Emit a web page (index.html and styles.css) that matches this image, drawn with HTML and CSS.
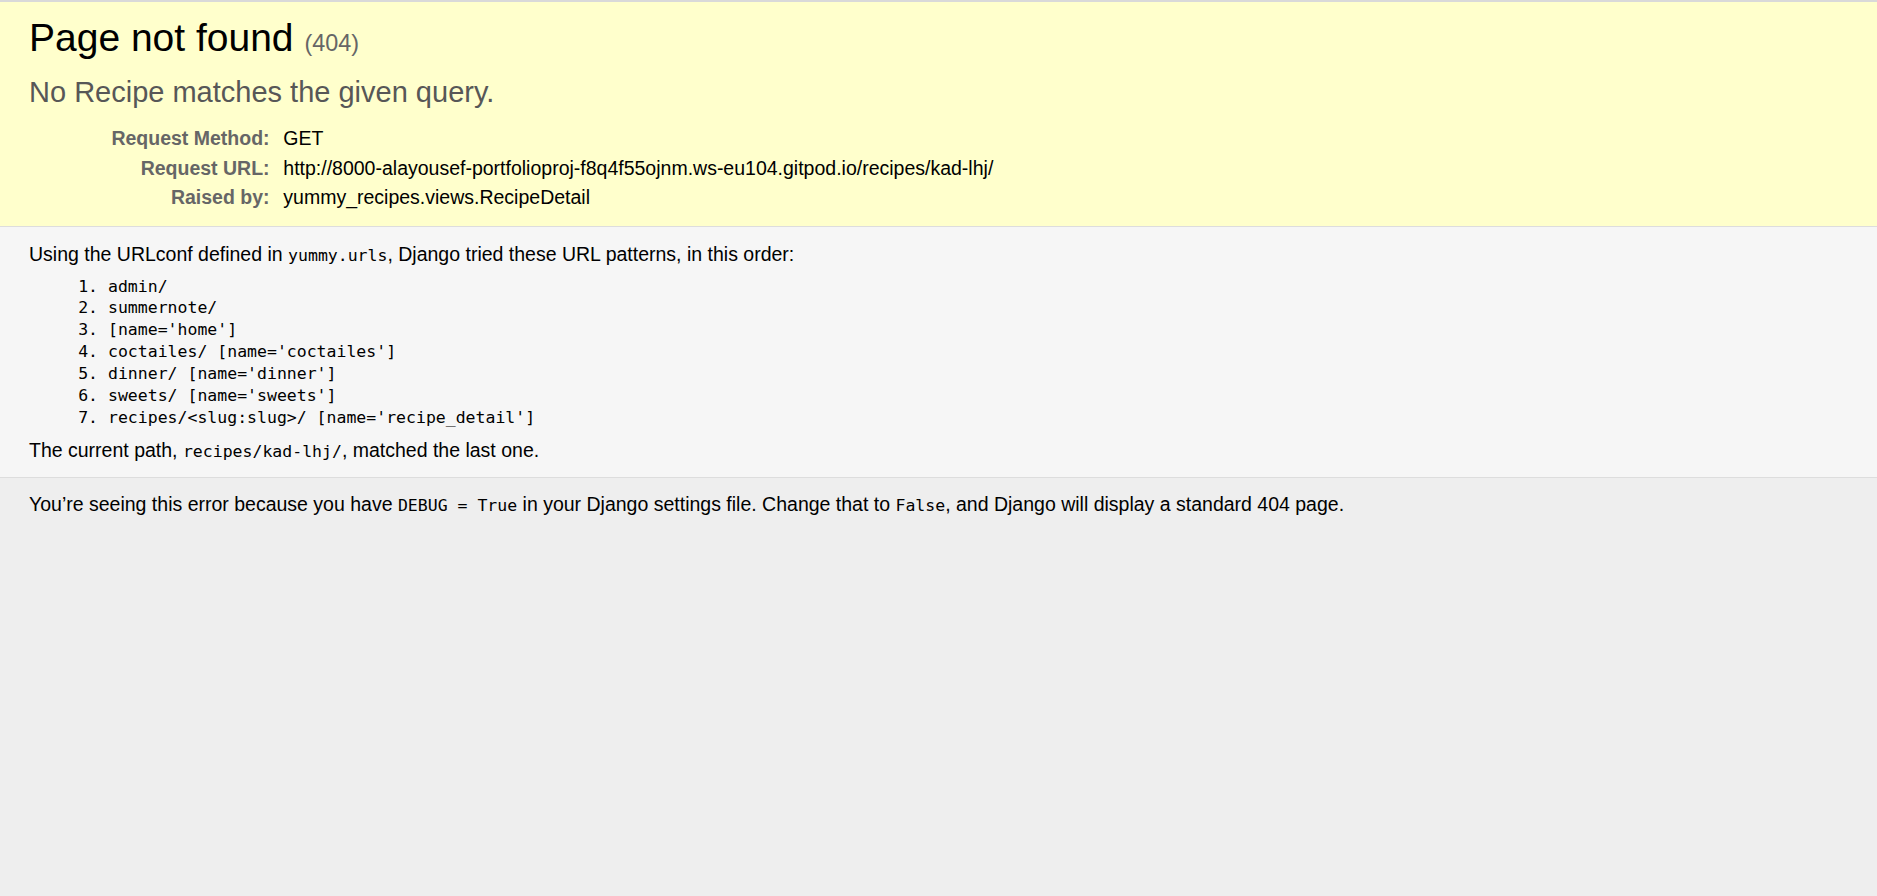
FILE: index.html
```html
<!DOCTYPE html>
<html lang="en">
<head>
<meta charset="utf-8">
<title>Page not found at /recipes/kad-lhj/</title>
<link rel="stylesheet" href="styles.css">
</head>
<body class="page">
  <header class="summary">
    <h1 class="title">Page not found <small class="code-num">(404)</small></h1>
    <pre class="exception-value">No Recipe matches the given query.</pre>
    <table class="meta">
      <tr><th class="meta-key">Request Method:</th><td class="meta-val">GET</td></tr>
      <tr><th class="meta-key">Request URL:</th><td class="meta-val">http://8000-alayousef-portfolioproj-f8q4f55ojnm.ws-eu104.gitpod.io/recipes/kad-lhj/</td></tr>
      <tr><th class="meta-key">Raised by:</th><td class="meta-val">yummy_recipes.views.RecipeDetail</td></tr>
    </table>
  </header>
  <main class="info">
    <p class="text">Using the URLconf defined in <code class="mono">yummy.urls</code>, Django tried these URL patterns, in this order:</p>
    <ol class="patterns">
      <li class="pattern">admin/</li>
      <li class="pattern">summernote/</li>
      <li class="pattern">[name='home']</li>
      <li class="pattern">coctailes/ [name='coctailes']</li>
      <li class="pattern">dinner/ [name='dinner']</li>
      <li class="pattern">sweets/ [name='sweets']</li>
      <li class="pattern">recipes/&lt;slug:slug&gt;/ [name='recipe_detail']</li>
    </ol>
    <p class="text">The current path, <code class="mono">recipes/kad-lhj/</code>, matched the last one.</p>
  </main>
  <footer class="explanation">
    <p class="text">You’re seeing this error because you have <code class="mono">DEBUG = True</code> in your Django settings file. Change that to <code class="mono">False</code>, and Django will display a standard 404 page.</p>
  </footer>
</body>
</html>
```
FILE: styles.css
```css
html, body, h1, pre, table, p, ol, li, code, small, th, td {
  margin: 0;
  padding: 0;
}

html {
  background: #eee;
}

.page {
  font-family: "Liberation Sans", Arial, sans-serif;
  font-size: 19.5px;
  line-height: 23px;
  background: #eee;
  color: #000;
  border-top: 2px solid #d9d9d9;
  min-height: 894px;
}

.summary {
  background: #ffc;
  padding: 12.5px 29px 14px;
  border-bottom: 1px solid #ddd;
}

.title {
  font-weight: normal;
  font-size: 39px;
  line-height: 46px;
  margin: 0 0 9px;
}

.code-num {
  font-size: 60%;
  color: #666;
  font-weight: normal;
}

.exception-value {
  font-family: "Liberation Sans", Arial, sans-serif;
  color: #575757;
  font-size: 29px;
  line-height: 34.5px;
  margin: 0 0 14.5px;
  white-space: pre-wrap;
}

.meta {
  border: none;
  border-collapse: collapse;
  width: 100%;
}

.meta-key,
.meta-val {
  vertical-align: top;
  padding: 2.5px 3.75px;
  line-height: 24.5px;
}

.meta-key {
  width: 236.8px;
  text-align: right;
  color: #666;
  font-weight: bold;
  padding-right: 10px;
}

.info {
  background: #f6f6f6;
  padding: 16px 29px 13.5px;
  border-bottom: 1px solid #ddd;
}

.patterns {
  margin: 8.5px 79px 10px;
}

.pattern {
  font-family: "DejaVu Sans Mono", "Liberation Mono", monospace;
  font-size: 16.5px;
  line-height: 21.94px;
}

.mono {
  font-family: "DejaVu Sans Mono", "Liberation Mono", monospace;
  font-size: 16.5px;
}

.explanation {
  background: #eee;
  padding: 15px 29px;
}
```
